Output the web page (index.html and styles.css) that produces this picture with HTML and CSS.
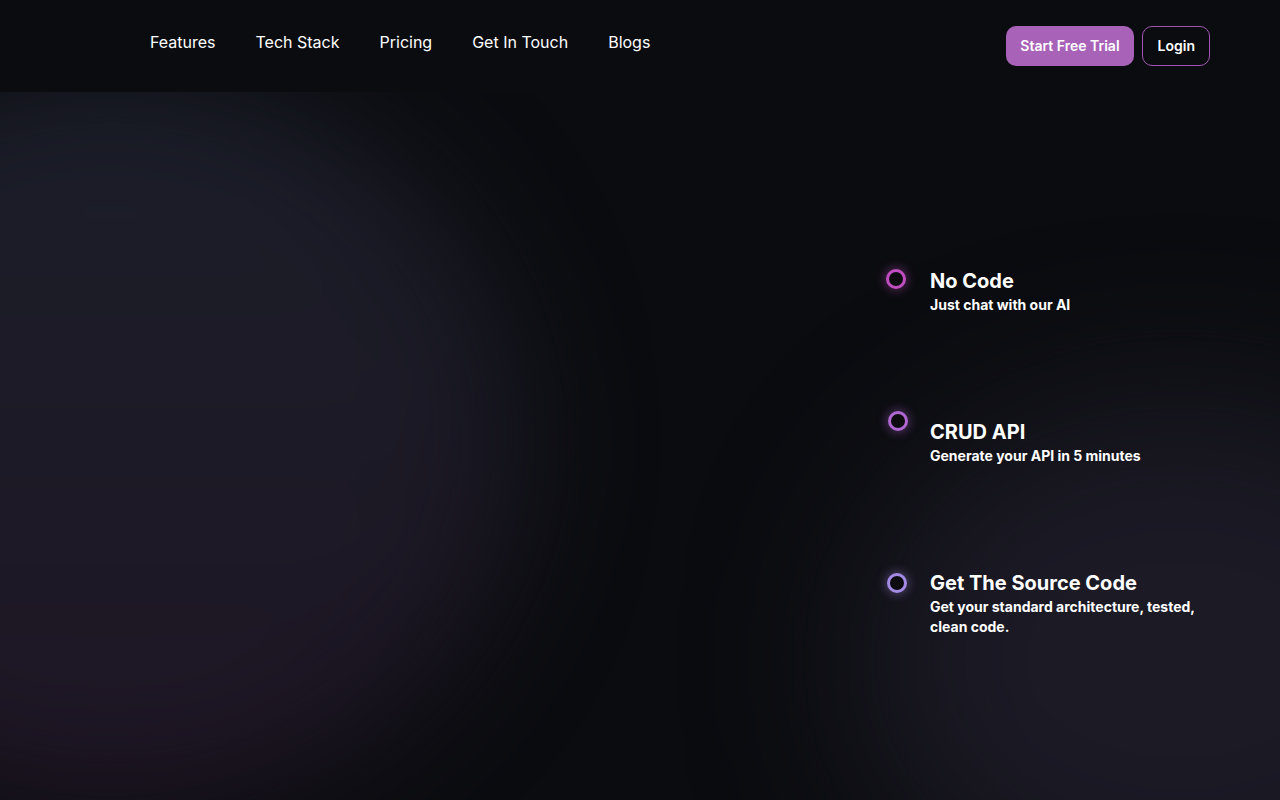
FILE: index.html
```html
<!DOCTYPE html>
<html lang="en">
<head>
<meta charset="utf-8">
<title>Landing</title>
<link rel="stylesheet" href="styles.css">
</head>
<body>
<div class="page">
  <div class="blob blob-left"></div>
  <div class="blob blob-right"></div>
  <header class="header">
    <nav class="nav">
      <a class="nav-link" href="#">Features</a>
      <a class="nav-link" href="#">Tech Stack</a>
      <a class="nav-link" href="#">Pricing</a>
      <a class="nav-link" href="#">Get In Touch</a>
      <a class="nav-link" href="#">Blogs</a>
    </nav>
    <div class="actions">
      <a class="btn btn-primary" href="#">Start Free Trial</a>
      <a class="btn btn-outline" href="#">Login</a>
    </div>
  </header>
  <main class="hero">
    <div class="hero-left"></div>
    <ul class="features">
      <li class="feature feature-1">
        <span class="dot dot-1"></span>
        <div class="feature-text">
          <h3 class="feature-title">No Code</h3>
          <p class="feature-sub">Just chat with our AI</p>
        </div>
      </li>
      <li class="feature feature-2">
        <span class="dot dot-2"></span>
        <div class="feature-text">
          <h3 class="feature-title">CRUD API</h3>
          <p class="feature-sub">Generate your API in 5 minutes</p>
        </div>
      </li>
      <li class="feature feature-3">
        <span class="dot dot-3"></span>
        <div class="feature-text">
          <h3 class="feature-title">Get The Source Code</h3>
          <p class="feature-sub">Get your standard architecture, tested, clean code.</p>
        </div>
      </li>
    </ul>
  </main>
</div>
</body>
</html>
```

FILE: styles.css
```css
* { box-sizing: border-box; }
html, body { margin: 0; padding: 0; }
body {
  background: #0b0c10;
  color: #ffffff;
  font-family: Inter, "Noto Sans", sans-serif;
  overflow: hidden;
}
.page {
  position: relative;
  width: 1280px;
  height: 800px;
  overflow: hidden;
}
.blob {
  position: absolute;
  border-radius: 50%;
  z-index: 0;
}
.blob-left {
  left: -300px;
  top: 70px;
  width: 820px;
  height: 740px;
  background: linear-gradient(180deg, #1b1e29 0%, #1c1a26 50%, #1f1524 100%);
  filter: blur(60px);
}
.blob-right {
  left: 860px;
  top: 400px;
  width: 640px;
  height: 520px;
  background: #1c1a25;
  filter: blur(80px);
}
.header {
  position: relative;
  z-index: 2;
  height: 92px;
  background: #0b0c10;
  display: flex;
  align-items: flex-start;
  justify-content: space-between;
  padding: 0 70px 0 130px;
}
.nav {
  display: flex;
  padding-top: 31px;
}
.nav-link {
  color: #ffffff;
  text-decoration: none;
  font-size: 16px;
  line-height: 22px;
  font-weight: 400;
  padding: 0 20px;
}
.actions {
  display: flex;
  gap: 8px;
  padding-top: 26px;
}
.btn {
  display: flex;
  align-items: center;
  height: 40px;
  padding-bottom: 1px;
  border-radius: 10px;
  font-size: 14px;
  font-weight: 600;
  color: #ffffff;
  text-decoration: none;
}
.btn-primary {
  background: #a862b8;
  padding-left: 14px;
  padding-right: 14px;
}
.btn-outline {
  border: 1px solid #a253b4;
  padding-left: 15px;
  padding-right: 14px;
  background: #0b0c10;
}
.hero {
  position: relative;
  z-index: 1;
  display: flex;
  justify-content: space-between;
  padding: 175px 70px 0 0;
}
.features {
  list-style: none;
  margin: 0;
  padding: 0;
  width: 324px;
  display: flex;
  flex-direction: column;
  gap: 103px;
}
.feature {
  display: flex;
  gap: 24px;
  align-items: flex-start;
}
.dot {
  flex: none;
  width: 20px;
  height: 20px;
  border-radius: 50%;
  border: 3px solid #c24fc1;
  background: #0c0c10;
}
.dot-1 { margin-top: 2px; border-color: #c04ec0; box-shadow: 0 0 10px 2px rgba(192, 78, 192, 0.35); }
.dot-2 { margin-top: -7px; margin-left: 2px; margin-right: -2px; border-color: #b067d2; box-shadow: 0 0 10px 2px rgba(176, 103, 210, 0.35); }
.dot-3 { margin-top: 4px; margin-left: 1px; margin-right: -1px; border-color: #a38ae4; box-shadow: 0 0 10px 2px rgba(163, 138, 228, 0.35); }
.feature-text { width: 280px; }
.feature-title {
  margin: 0;
  font-size: 20px;
  line-height: 28px;
  font-weight: 700;
}
.feature-sub {
  margin: 0;
  font-size: 14px;
  line-height: 20px;
  font-weight: 700;
}
```
